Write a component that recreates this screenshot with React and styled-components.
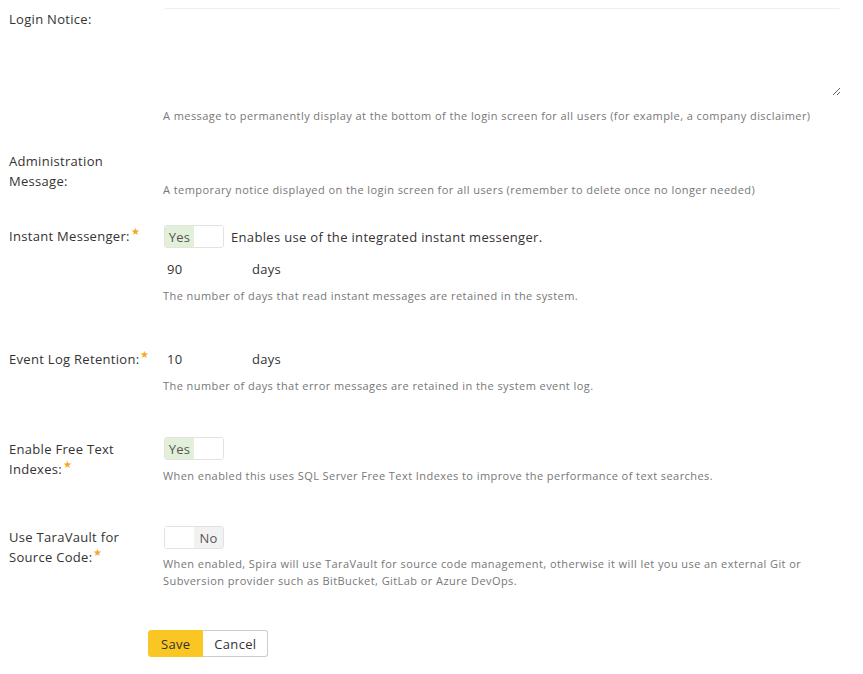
import React from 'react';
import styled, { createGlobalStyle } from 'styled-components';

const GlobalStyle = createGlobalStyle`
  body {
    margin: 0;
    background: #fff;
    font-family: 'Open Sans', 'Liberation Sans', sans-serif;
    color: #333;
  }
`;

const Page = styled.div`
  padding: 0 22px 0 9px;
`;

const Row = styled.div`
  display: grid;
  grid-template-columns: 154px 1fr;
  align-items: start;
  margin-top: ${({ $top }) => $top}px;
`;

const Label = styled.label`
  font-size: 13px;
  line-height: 20px;
  letter-spacing: 0.3px;
  color: #333;
  padding-top: ${({ $pad }) => $pad || 0}px;
  padding-right: 4px;
`;

const Star = styled.span`
  display: inline-block;
  vertical-align: top;
  color: #f5a623;
  font-size: 10px;
  line-height: 10px;
  margin-left: 1px;
`;

const Field = styled.div`
  display: flex;
  flex-direction: column;
  align-items: flex-start;
  padding-top: ${({ $pad }) => $pad || 0}px;
`;

const TextArea = styled.textarea`
  box-sizing: border-box;
  width: 100%;
  height: 88px;
  border: none;
  border-top: 1px solid #eee;
  border-radius: 4px;
  resize: vertical;
  outline: none;
  font-family: inherit;
`;

const Help = styled.div`
  font-size: 11px;
  line-height: 17px;
  letter-spacing: 0.43px;
  color: #777;
  margin-top: ${({ $gap }) => $gap || 0}px;
`;

const Inline = styled.div`
  display: flex;
  align-items: center;
  gap: 7px;
`;

const Toggle = styled.div`
  display: flex;
  width: 60px;
  height: 23px;
  margin-left: 1px;
  box-sizing: border-box;
  border: 1px solid #e2e2e2;
  border-radius: 3px;
  overflow: hidden;
`;

const ToggleHalf = styled.span`
  flex: 1;
  display: flex;
  align-items: center;
  justify-content: center;
  font-size: 13px;
  letter-spacing: 0.3px;
  color: #555;
  background: ${({ $on, $off }) => ($on ? '#e2f0da' : $off ? '#f2f2f2' : '#fff')};
`;

const ToggleText = styled.span`
  font-size: 13px;
  letter-spacing: 0.33px;
  color: #333;
`;

const NumberLine = styled.div`
  display: flex;
  align-items: center;
  height: 22px;
  font-size: 13px;
  letter-spacing: 0.3px;
  color: #333;
  margin-top: ${({ $gap }) => $gap || 0}px;
`;

const NumberValue = styled.span`
  width: 85px;
  padding-left: 4px;
`;

const Buttons = styled.div`
  display: flex;
  margin: 41px 0 0 139px;
`;

const Button = styled.button`
  height: 27px;
  padding: 0 ${({ $primary }) => ($primary ? 12 : 11)}px;
  font-family: inherit;
  font-size: 13px;
  letter-spacing: 0.3px;
  color: #333;
  background: ${({ $primary }) => ($primary ? '#f9c623' : '#fff')};
  border: 1px solid ${({ $primary }) => ($primary ? '#f9c623' : '#ccc')};
  border-radius: ${({ $primary }) => ($primary ? '3px 0 0 3px' : '0 3px 3px 0')};
  ${({ $primary }) => (!$primary ? 'border-left: none;' : '')}
`;

const Switch = ({ on }) => (
  <Toggle>
    {on ? (
      <>
        <ToggleHalf $on>Yes</ToggleHalf>
        <ToggleHalf />
      </>
    ) : (
      <>
        <ToggleHalf />
        <ToggleHalf $off>No</ToggleHalf>
      </>
    )}
  </Toggle>
);

export default function App() {
  return (
    <Page>
      <GlobalStyle />
      <Row $top={8}>
        <Label $pad={1}>Login Notice:</Label>
        <Field>
          <TextArea />
          <Help $gap={11}>
            A message to permanently display at the bottom of the login screen for all users (for example, a company disclaimer)
          </Help>
        </Field>
      </Row>

      <Row $top={27}>
        <Label>Administration Message:</Label>
        <Field $pad={30}>
          <Help>A temporary notice displayed on the login screen for all users (remember to delete once no longer needed)</Help>
        </Field>
      </Row>

      <Row $top={27}>
        <Label $pad={1}>
          Instant Messenger:<Star>★</Star>
        </Label>
        <Field>
          <Inline>
            <Switch on />
            <ToggleText>Enables use of the integrated instant messenger.</ToggleText>
          </Inline>
          <NumberLine $gap={10}>
            <NumberValue>90</NumberValue>days
          </NumberLine>
          <Help $gap={7}>The number of days that read instant messages are retained in the system.</Help>
        </Field>
      </Row>

      <Row $top={44}>
        <Label $pad={1}>
          Event Log Retention:<Star>★</Star>
        </Label>
        <Field>
          <NumberLine>
            <NumberValue>10</NumberValue>days
          </NumberLine>
          <Help $gap={7}>The number of days that error messages are retained in the system event log.</Help>
        </Field>
      </Row>

      <Row $top={43}>
        <Label $pad={2}>
          Enable Free Text Indexes:<Star>★</Star>
        </Label>
        <Field>
          <Switch on />
          <Help $gap={7}>When enabled this uses SQL Server Free Text Indexes to improve the performance of text searches.</Help>
        </Field>
      </Row>

      <Row $top={42}>
        <Label $pad={1}>
          Use TaraVault for Source Code:<Star>★</Star>
        </Label>
        <Field>
          <Switch />
          <Help $gap={6}>
            When enabled, Spira will use TaraVault for source code management, otherwise it will let you use an external Git or Subversion provider such as BitBucket, GitLab or Azure DevOps.
          </Help>
        </Field>
      </Row>

      <Buttons>
        <Button $primary>Save</Button>
        <Button>Cancel</Button>
      </Buttons>
    </Page>
  );
}
